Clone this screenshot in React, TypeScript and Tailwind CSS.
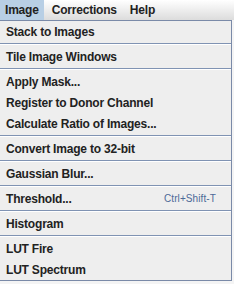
import React from 'react';

type Entry = { label: string; shortcut?: string } | 'sep';

const entries: Entry[] = [
  { label: 'Stack to Images' },
  'sep',
  { label: 'Tile Image Windows' },
  'sep',
  { label: 'Apply Mask...' },
  { label: 'Register to Donor Channel' },
  { label: 'Calculate Ratio of Images...' },
  'sep',
  { label: 'Convert Image to 32-bit' },
  'sep',
  { label: 'Gaussian Blur...' },
  'sep',
  { label: 'Threshold...', shortcut: 'Ctrl+Shift-T' },
  'sep',
  { label: 'Histogram' },
  'sep',
  { label: 'LUT Fire' },
  { label: 'LUT Spectrum' },
];

const Separator = () => (
  <div className="h-[4px] pt-[1px]">
    <div className="h-px bg-[#8093b3]" />
    <div className="h-px bg-white" />
  </div>
);

export default function App() {
  return (
    <div className="w-[234px] h-[284px] overflow-hidden bg-[#f4f4f4] font-['Liberation_Sans',Arial,sans-serif] text-[#222]">
      {/* Menu bar */}
      <div className="h-[20px] flex items-stretch bg-gradient-to-b from-white to-[#dcdcdc] text-[12px] font-bold tracking-[-0.2px]">
        <div className="px-[5px] flex items-center bg-[#b8cfe5]">Image</div>
        <div className="pl-[8px] pr-[7px] flex items-center">Corrections</div>
        <div className="px-[6px] flex items-center">Help</div>
      </div>

      {/* Popup */}
      <div className="w-[232px] bg-[#eeeeee] border-t border-r border-b border-[#7a8aa8] flex flex-col">
        {entries.map((e, i) =>
          e === 'sep' ? (
            <Separator key={i} />
          ) : (
            <div key={i} className="h-[21px] flex items-center justify-between pl-[6px] pr-[15px]">
              <span className="text-[12px] font-bold tracking-[-0.2px]">{e.label}</span>
              {e.shortcut && (
                <span className="text-[10px] text-[#4d6a98] tracking-[0.1px]">{e.shortcut}</span>
              )}
            </div>
          )
        )}
      </div>
    </div>
  );
}
